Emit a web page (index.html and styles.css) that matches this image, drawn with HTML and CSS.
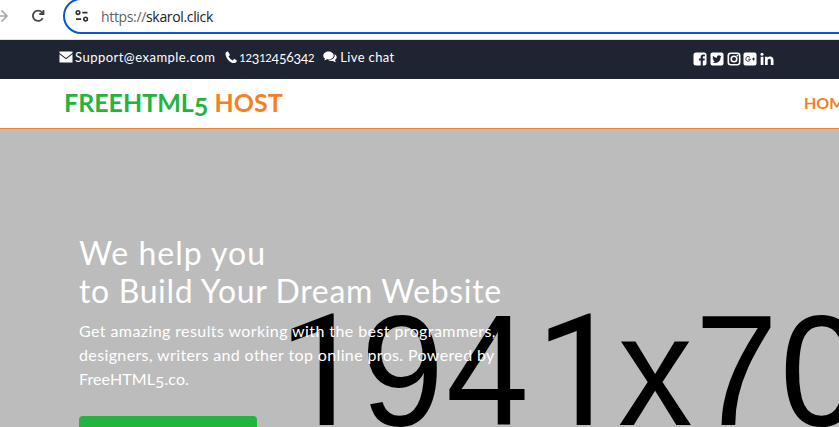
FILE: index.html
```html
<!DOCTYPE html>
<html lang="en">
<head>
<meta charset="utf-8">
<title>FreeHTML5 Host</title>
<link rel="stylesheet" href="styles.css">
</head>
<body>
<div class="browser">
  <svg class="forward" viewBox="0 0 9 14"><path d="M0 7H7M1.5 1.5L7 7L1.5 12.5"/></svg>
  <svg class="reload" viewBox="0 0 14 14"><path d="M11.7 9.2A5.2 5.2 0 1 1 11 3.3L12 4.7M12.5 1V5H8.3"/></svg>
  <div class="address">
    <svg class="tune" viewBox="0 0 14 12"><path d="M7.3 2.6H12.5M1 9.1H6.2"/><circle cx="3" cy="2.6" r="1.8"/><circle cx="10.6" cy="9.1" r="1.8"/></svg>
    <span class="url"><span class="scheme">https://</span>skarol.click</span>
  </div>
</div>
<header class="topbar">
  <div class="contacts">
    <a class="contact mail"><svg class="ico" viewBox="0 0 14 14"><path d="M.5 1.5h13v1.4L7 7.9.5 2.9zM.5 4.3 7 9.2l6.5-4.9v8.2H.5z"/></svg><span>Support@example.com</span></a>
    <a class="contact phone"><svg class="ico" viewBox="0 0 12 14"><path d="M.5 3.2C.8 2 2 1.4 3 1.4L5 5 3.5 6.4Q5 9 7.7 10.4L9.2 8.8l2.6 1.8c0 1.3-.9 2.2-2.2 2.5C5 13.5.2 7.5.5 3.2z"/></svg><span><i class="low">12</i><i class="drop">3</i><i class="low">12</i><i class="drop">45</i>6<i class="drop">34</i><i class="low">2</i></span></a>
    <a class="contact chat"><svg class="ico" viewBox="0 0 14 14"><path d="M10.7 5.4c0 2.3-2.3 4-5.2 4-.6 0-1 0-1.500-.1-1 .7-1.900 1-3 1 .6-.5.9-1.100 1-1.800C.9 7.700.3 6.600.3 5.400c0-2.300 2.300-4 5.200-4s5.200 1.700 5.200 4zM11.600 4.200c1.300.7 2.100 1.700 2.100 2.900 0 1.200-.6 2.200-1.700 2.900.1.800.5 1.300 1 1.900-1.200-.1-2.100-.4-3-1-1.800.3-3.500 0-4.700-.8 3.600 0 6.400-2 6.400-4.700z"/></svg><span>Live chat</span></a>
  </div>
  <div class="social">
    <svg viewBox="0 0 14 14"><path fill-rule="evenodd" d="M3 .5h8Q13.500.5 13.500 3v8q0 2.500-2.500 2.500H9.800V8.600h1.700l.3-2H9.800V5.400c0-.8.3-1.100 1.100-1.100h1V2.400h-1.600C8.500 2.400 7.700 3.500 7.700 5v1.600H6v2h1.700v4.900H3Q.5 13.500.5 11V3Q.5.5 3 .5z"/></svg>
    <svg viewBox="0 0 14 14"><rect x=".5" y=".5" width="13" height="13" rx="2"/><path class="dark" d="M11.600 4l-1 1.100c.1 3.500-2.300 5.900-5.400 5.900-1.100 0-2-.3-2.800-.8 1 .1 1.900-.2 2.600-.7-.9-.1-1.500-.6-1.700-1.400h.8C3.100 7.800 2.700 7 2.700 6.100l.9.2c-.9-.7-1.100-1.700-.6-2.500 1 1.200 2.400 1.900 4 2-.3-1.400.6-2.500 1.900-2.500.6 0 1 .2 1.400.6l1.100-.4-.7 1z"/></svg>
    <svg viewBox="0 0 14 14"><rect class="line" x="1.3" y="1.3" width="11.4" height="11.4" rx="2.500"/><circle class="line" cx="7" cy="7" r="2.800"/><circle cx="10.400" cy="3.600" r=".9"/></svg>
    <svg viewBox="0 0 14 14"><rect x=".5" y=".5" width="13" height="13" rx="2"/><path class="mark" d="M6.900 5.400A2.300 2.300 0 1 0 7.400 7.200H5.300M9 7H12M10.500 5.500v3"/></svg>
    <svg viewBox="0 0 14 14"><path d="M.7 4.800h2.700V13H.7zM5 4.800h2.600V6c.5-.9 1.400-1.400 2.600-1.400 2.200 0 3.300 1.400 3.300 3.700V13h-2.700V8.700c0-1.200-.4-1.900-1.400-1.900S7.700 7.500 7.700 8.700V13H5z"/><circle cx="2" cy="2.300" r="1.500"/></svg>
  </div>
</header>
<nav class="nav">
  <a class="brand">FREEHTML<i class="drop">5</i> <span class="host">HOST</span></a>
  <a class="link">HOME</a>
</nav>
<main class="hero">
  <div class="placeholder"><span class="one">1</span><span>9</span><span>4</span><span class="one">1</span><span class="by">x</span><span>7</span><span>0</span><span>0</span></div>
  <section class="intro">
    <h1><span class="h-a">We help you</span><br><span class="h-b">to Build Your Dream Website</span></h1>
    <p><span class="p-a">Get amazing results working with the best programmers,</span><br><span class="p-b">designers, writers and other top online pros. Powered by</span><br><span class="p-c">FreeHTML<i class="drop">5</i>.co.</span></p>
    <a class="button"></a>
  </section>
</main>
</body>
</html>
```
FILE: styles.css
```css
* { box-sizing: border-box; }
body {
  margin: 0;
  height: 427px;
  overflow: hidden;
  background: #fff;
  font-family: Lato, sans-serif;
}
svg { display: block; flex: none; }
i { font-style: normal; }
.low { font-size: 0.86em; }
.drop { display: inline-block; line-height: 1; transform: translateY(0.16em); }

.browser {
  display: flex;
  align-items: flex-start;
  height: 40px;
  overflow: hidden;
  border-bottom: 1px solid #dfe1e5;
}
.forward { width: 9px; height: 14px; margin-top: 9px; fill: none; stroke: #a5a6a8; stroke-width: 1.6; }
.reload { width: 14px; height: 14px; margin: 9px 0 0 22px; fill: none; stroke: #474747; stroke-width: 1.8; }
.address {
  display: flex;
  align-items: center;
  flex: none;
  width: 800px;
  height: 36px;
  margin: -2px 0 0 18px;
  padding-left: 10px;
  border: 2px solid #0b57d0;
  border-radius: 18px;
}
.tune { width: 14px; height: 12px; fill: none; stroke: #303236; stroke-width: 1.6; }
.url { margin-left: 12px; font: 14px "Open Sans", sans-serif; color: #202124; letter-spacing: -0.34px; }
.scheme { color: #5f6368; }

.topbar {
  display: flex;
  justify-content: space-between;
  height: 39px;
  padding: 10px 65px 0 59px;
  background: #1f2433;
  color: #fff;
  font-size: 13px;
  line-height: 16px;
}
.contacts { display: flex; margin-top: -1px; }
.contact { display: flex; white-space: nowrap; }
.ico { width: 14px; height: 14px; margin: 1px 2px 0 0; fill: #fff; }
.mail { letter-spacing: 0.48px; }
.phone { margin-left: 10px; letter-spacing: -0.25px; }
.phone .ico { width: 12px; }
.chat { margin-left: 9px; letter-spacing: 0.35px; }
.chat .ico { margin-right: 3px; }
.social { display: flex; gap: 2.75px; padding-top: 2px; }
.social svg { width: 14px; height: 14px; fill: #fff; }
.social .dark { fill: #1f2433; }
.social .line { fill: none; stroke: #fff; stroke-width: 1.6; }
.social .mark { fill: none; stroke: #1f2433; stroke-width: 0.9; }

.nav {
  display: flex;
  align-items: center;
  height: 50px;
  padding: 0 0 3px 64px;
  border-bottom: 1px solid #f57f25;
  white-space: nowrap;
}
.brand { width: 740px; color: #25b340; font-size: 25px; font-weight: 700; flex: none; }
.host, .link { color: #f57f25; }
.link { font-size: 16px; font-weight: 700; }

.hero {
  display: grid;
  height: 298px;
  overflow: hidden;
  background: #bcbcbc;
}
.placeholder, .intro { grid-area: 1 / 1; }
.placeholder {
  display: flex;
  align-items: baseline;
  padding: 156px 0 0 275px;
  color: #000;
  font: 158.5px/172px "Liberation Sans", sans-serif;
}
.placeholder span { flex: none; width: 85.7px; transform: scaleX(0.94); transform-origin: 0 0; }
.placeholder .by { width: 77px; }
.placeholder .one { padding-left: 3.5px; font-family: Roboto, sans-serif; font-size: 155px; transform: none; }
.intro { z-index: 1; padding: 105px 0 0 79px; color: #fff; white-space: nowrap; }
h1 { margin: 0; font-size: 32px; font-weight: 400; line-height: 38px; }
.h-a { letter-spacing: 1px; }
.h-b { letter-spacing: 0.64px; }
p { margin: 9px 0 25px; font-size: 16px; line-height: 24px; }
.p-a { letter-spacing: 0.41px; }
.p-b { letter-spacing: 0.37px; }
.p-c { letter-spacing: 0.1px; }
.button { display: block; width: 178px; height: 50px; border-radius: 4px; background: #25b340; }
```
